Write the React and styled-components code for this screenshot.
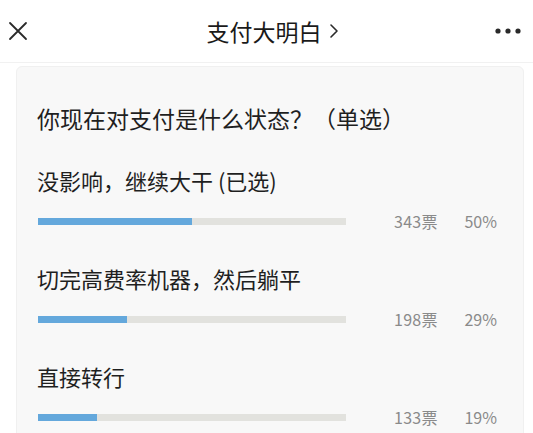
import React from 'react';
import styled, { createGlobalStyle } from 'styled-components';

const GlobalStyle = createGlobalStyle`
  html, body {
    margin: 0;
    padding: 0;
    background: #ffffff;
  }
  body {
    font-family: "Noto Sans CJK SC", "Noto Sans", sans-serif;
    color: #1f1f1f;
  }
`;

const Page = styled.div`
  width: 533px;
  height: 433px;
  overflow: hidden;
  background: #ffffff;
`;

const Header = styled.div`
  height: 62px;
  display: grid;
  grid-template-columns: 60px 1fr 60px;
  align-items: center;
  border-bottom: 1px solid #f1f1f1;
`;

const IconButton = styled.div`
  display: flex;
  align-items: center;
  justify-content: ${(p) => (p.$right ? 'flex-end' : 'flex-start')};
  padding: ${(p) => (p.$right ? '0 12px 0 0' : '0 0 0 7px')};
  height: 100%;
`;

const Title = styled.div`
  display: flex;
  align-items: center;
  justify-content: center;
  gap: 7px;
  font-size: 23px;
  font-weight: 400;
  color: #1a1a1a;
  padding-left: 12px;
`;

const Card = styled.div`
  margin: 3px 9px 0 16px;
  background: #f8f8f8;
  border: 1px solid #f0f0f0;
  border-radius: 6px;
  padding: 36px 26px 0 20px;
  height: 420px;
  box-sizing: border-box;
`;

const Question = styled.div`
  font-size: 23px;
  line-height: 30px;
  color: #1f1f1f;
  margin-bottom: 33px;
`;

const Option = styled.div`
  margin-bottom: 32px;
`;

const Label = styled.div`
  font-size: 22px;
  line-height: 28px;
  color: #1f1f1f;
`;

const BarRow = styled.div`
  margin-top: 16px;
  height: 22px;
  display: flex;
  align-items: center;
`;

const Track = styled.div`
  width: 310px;
  height: 7px;
  margin-left: 1px;
  background: #e2e2de;
  overflow: hidden;
`;

const Fill = styled.div`
  height: 100%;
  background: #64a8dc;
`;

const Votes = styled.span`
  margin-left: 48px;
  width: 71px;
  font-size: 16px;
  letter-spacing: 0.3px;
  color: #8a8a8a;
`;

const Percent = styled.span`
  font-size: 16px;
  color: #8a8a8a;
`;

const options = [
  { label: '没影响，继续大干 (已选)', votes: 343, pct: 50 },
  { label: '切完高费率机器，然后躺平', votes: 198, pct: 29 },
  { label: '直接转行', votes: 133, pct: 19 },
];

export default function App() {
  return (
    <Page>
      <GlobalStyle />
      <Header>
        <IconButton>
          <svg width="22" height="22" viewBox="0 0 22 22" fill="none" stroke="#2a2a2a" strokeWidth="1.8" strokeLinecap="round">
            <path d="M3 3 L19 19 M19 3 L3 19" />
          </svg>
        </IconButton>
        <Title>
          支付大明白
          <svg width="10" height="16" viewBox="0 0 10 16" fill="none" stroke="#2a2a2a" strokeWidth="1.6" strokeLinecap="round" strokeLinejoin="round">
            <path d="M2 2 L8 8 L2 14" />
          </svg>
        </Title>
        <IconButton $right>
          <svg width="26" height="6" viewBox="0 0 26 6" fill="#2a2a2a">
            <circle cx="3" cy="3" r="2.6" />
            <circle cx="13" cy="3" r="2.6" />
            <circle cx="23" cy="3" r="2.6" />
          </svg>
        </IconButton>
      </Header>
      <Card>
        <Question>你现在对支付是什么状态？（单选）</Question>
        {options.map((o) => (
          <Option key={o.label}>
            <Label>{o.label}</Label>
            <BarRow>
              <Track>
                <Fill style={{ width: `${o.pct}%` }} />
              </Track>
              <Votes>{o.votes}票</Votes>
              <Percent>{o.pct}%</Percent>
            </BarRow>
          </Option>
        ))}
      </Card>
    </Page>
  );
}
